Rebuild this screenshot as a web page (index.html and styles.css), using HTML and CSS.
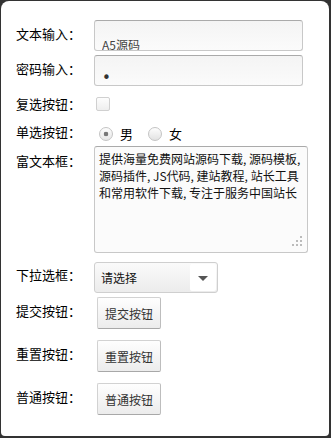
FILE: index.html
```html
<!DOCTYPE html>
<html lang="zh">
<head>
<meta charset="utf-8">
<title>表单</title>
<link rel="stylesheet" href="styles.css">
</head>
<body>
<div class="card">
  <form class="form">
    <div class="row">
      <label class="label">文本输入<span class="colon">：</span></label>
      <input class="field" type="text" value="A5源码">
    </div>
    <div class="row">
      <label class="label">密码输入<span class="colon">：</span></label>
      <input class="field field-pass" type="password" value="1">
    </div>
    <div class="row row-check">
      <label class="label">复选按钮<span class="colon">：</span></label>
      <input class="check" type="checkbox">
    </div>
    <div class="row row-radio">
      <label class="label">单选按钮<span class="colon">：</span></label>
      <div class="radios">
        <input class="radio" type="radio" name="sex" checked><span class="radio-text">男</span>
        <input class="radio radio-second" type="radio" name="sex"><span class="radio-text">女</span>
      </div>
    </div>
    <div class="row row-area">
      <label class="label">富文本框<span class="colon">：</span></label>
      <div class="area-wrap">
        <textarea class="area">提供海量免费网站源码下载, 源码模板,
源码插件, JS代码, 建站教程, 站长工具
和常用软件下载, 专注于服务中国站长</textarea>
        <span class="grip">
          <i class="dot d1"></i><i class="dot d2"></i><i class="dot d3"></i>
          <i class="dot d4"></i><i class="dot d5"></i><i class="dot d6"></i>
        </span>
      </div>
    </div>
    <div class="row row-select">
      <label class="label">下拉选框<span class="colon">：</span></label>
      <div class="select-wrap">
        <select class="select"><option>请选择</option></select>
        <span class="arrow-box"><span class="arrow"></span></span>
      </div>
    </div>
    <div class="row row-btn">
      <label class="label">提交按钮<span class="colon">：</span></label>
      <button class="btn" type="submit">提交按钮</button>
    </div>
    <div class="row row-btn">
      <label class="label">重置按钮<span class="colon">：</span></label>
      <button class="btn" type="reset">重置按钮</button>
    </div>
    <div class="row row-btn">
      <label class="label">普通按钮<span class="colon">：</span></label>
      <button class="btn" type="button">普通按钮</button>
    </div>
  </form>
</div>
</body>
</html>
```
FILE: styles.css
```css
html, body {
  margin: 0;
  padding: 0;
  background: #333;
}
body {
  width: 331px;
  height: 438px;
  overflow: hidden;
  font-family: "Noto Sans CJK SC", "Noto Sans", sans-serif;
}
.card {
  box-sizing: border-box;
  margin: 1px 2px 2px 1px;
  width: 328px;
  height: 435px;
  background: #fff;
  border-radius: 8px 8px 4px 4px;
  padding: 19px 0 0 15px;
}
.form {
  display: flex;
  flex-direction: column;
  margin: 0;
}
.row {
  display: flex;
  align-items: flex-start;
  margin-bottom: 4px;
}
.label {
  width: 78px;
  flex: none;
  margin-top: 6px;
  font-size: 13px;
  line-height: 16px;
  color: #000;
}
.colon {
  font-family: "Noto Sans CJK TC", "Noto Sans CJK SC", sans-serif;
}
.field {
  box-sizing: border-box;
  width: 209px;
  height: 31px;
  margin: 0;
  padding: 17px 7px 0;
  border: 1px solid #c8c8c8;
  border-top-color: #aaa;
  border-radius: 3px;
  background: linear-gradient(#f4f4f4, #fbfbfb);
  font-family: "Noto Sans CJK SC", "Noto Sans", sans-serif;
  font-size: 12px;
  line-height: 12px;
  color: #444;
  outline: none;
}
.field-pass {
  font-family: "DejaVu Sans", sans-serif;
  font-size: 15px;
  line-height: 12px;
  padding: 15px 0 0 7px;
  color: #333;
}
.row-check {
  min-height: 28px;
  margin-bottom: 0;
}
.check {
  appearance: none;
  -webkit-appearance: none;
  box-sizing: border-box;
  width: 14px;
  height: 14px;
  margin: 7px 0 0 2px;
  border: 1px solid #d0d0d0;
  border-radius: 2px;
  background: linear-gradient(#fdfdfd, #eee);
}
.row-radio {
  min-height: 28px;
  margin-bottom: 0;
}
.radios {
  display: flex;
  align-items: center;
  margin-top: 9px;
  margin-left: 5px;
}
.radio {
  appearance: none;
  -webkit-appearance: none;
  box-sizing: border-box;
  width: 14px;
  height: 14px;
  margin: 0;
  border: 1px solid #c4c4c4;
  border-radius: 50%;
  background: linear-gradient(#fdfdfd, #e2e2e2);
}
.radio:checked {
  background: radial-gradient(circle, #777 0 2px, rgba(119,119,119,0) 2.6px), linear-gradient(#fdfdfd, #e6e6e6);
}
.radio-text {
  margin-left: 7px;
  font-size: 13px;
  line-height: 14px;
  color: #000;
}
.radio-second {
  margin-left: 15px;
}
.row-area {
  margin-bottom: 9px;
}
.row-area .label {
  margin-top: 7px;
}
.area-wrap {
  position: relative;
  width: 214px;
  height: 107px;
}
.area {
  box-sizing: border-box;
  display: block;
  width: 214px;
  height: 107px;
  margin: 0;
  padding: 3px 4px;
  border: 1px solid #c8c8c8;
  border-top-color: #aaa;
  border-radius: 3px;
  background: #fbfbfb;
  font-family: "Noto Sans CJK SC", "Noto Sans", sans-serif;
  font-size: 12px;
  line-height: 17px;
  color: #111;
  resize: none;
  overflow: hidden;
  white-space: pre;
  outline: none;
}
.grip {
  position: absolute;
  right: 6px;
  bottom: 6px;
  width: 11px;
  height: 11px;
}
.dot {
  position: absolute;
  width: 2px;
  height: 2px;
  background: #bbb;
}
.d1 { right: 0; top: 0; }
.d2 { right: 0; top: 4px; }
.d3 { right: 4px; top: 4px; }
.d4 { right: 0; top: 8px; }
.d5 { right: 4px; top: 8px; }
.d6 { right: 8px; top: 8px; }
.row-select .label {
  margin-top: 5px;
}
.select-wrap {
  position: relative;
  width: 124px;
  height: 31px;
}
.select {
  appearance: none;
  -webkit-appearance: none;
  box-sizing: border-box;
  width: 124px;
  height: 31px;
  margin: 0;
  padding: 0 6px;
  border: 1px solid #cfcfcf;
  border-radius: 3px;
  background: linear-gradient(#fafafa, #ececec);
  font-family: "Noto Sans CJK SC", "Noto Sans", sans-serif;
  font-size: 12px;
  color: #111;
  outline: none;
}
.arrow-box {
  position: absolute;
  right: 2px;
  top: 2px;
  width: 26px;
  height: 27px;
  background: #fff;
  border-radius: 2px;
  display: flex;
  align-items: center;
  justify-content: center;
  pointer-events: none;
}
.arrow {
  width: 0;
  height: 0;
  border-left: 5px solid transparent;
  border-right: 5px solid transparent;
  border-top: 5px solid #555;
  margin-top: 1px;
}
.row-btn {
  margin-bottom: 11px;
}
.btn {
  box-sizing: border-box;
  width: 64px;
  height: 32px;
  margin: 0 0 0 3px;
  padding: 0;
  border: 1px solid #d2d2d2;
  border-bottom-color: #a8a8a8;
  border-right-color: #bdbdbd;
  border-radius: 2px;
  background: linear-gradient(#fefefe, #ececec);
  font-family: "Noto Sans CJK SC", "Noto Sans", sans-serif;
  font-size: 12px;
  color: #333;
}
```
